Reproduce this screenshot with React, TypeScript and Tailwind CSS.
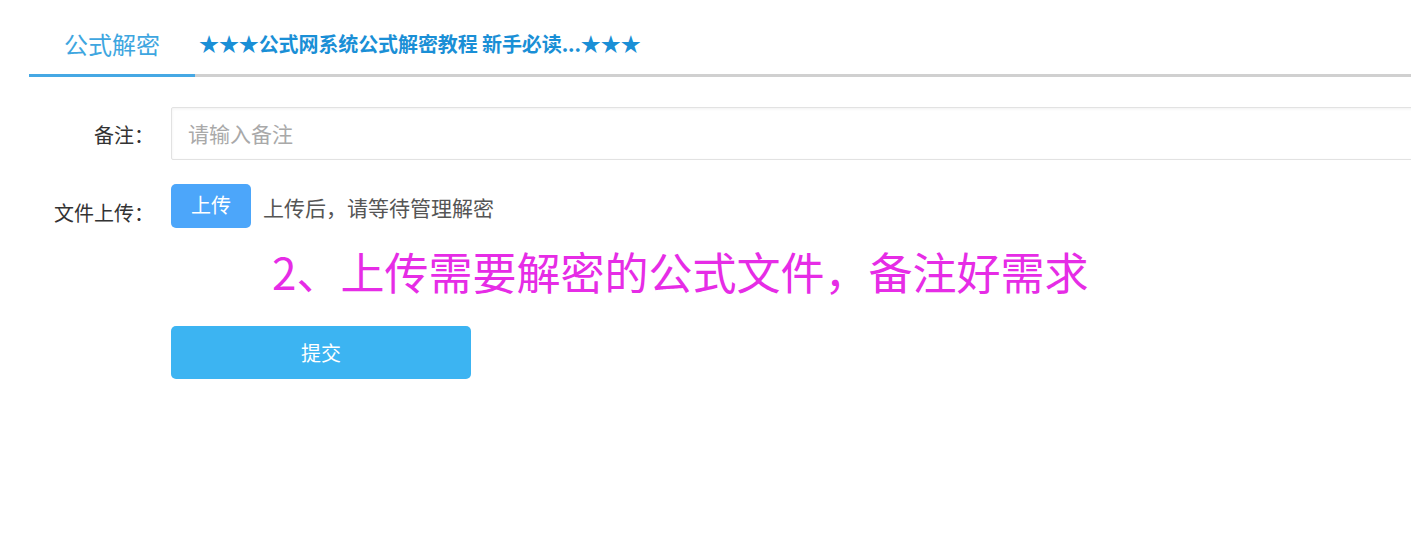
import React from "react";

export default function App() {
  const font = { fontFamily: '"Noto Sans CJK SC", "Noto Sans", sans-serif' };
  return (
    <div className="w-[1411px] h-[547px] overflow-hidden bg-white" style={font}>
      <div className="flex items-start ml-[29px] h-[77px] border-b-[3px] border-[#d0d0d0] w-[1500px]">
        <div className="w-[166px] h-[77px] -mb-[3px] border-b-[3px] border-[#46a8e4] flex justify-center pt-[26px]">
          <span className="text-[24px] leading-[36px] text-[#3ea6e0]">公式解密</span>
        </div>
        <div className="ml-[4px] pt-[28px]">
          <span className="text-[20px] leading-[32px] font-bold text-[#1a8fd6] tracking-[-0.1px]">
            ★★★公式网系统公式解密教程 新手必读...★★★
          </span>
        </div>
      </div>

      <div className="mt-[30px] flex items-center w-[1500px]">
        <div className="w-[154px] text-right text-[20px] leading-[30px] text-[#333] pt-[2px]">备注：</div>
        <div className="ml-[17px] w-[1300px] h-[53px] border border-[#e2e2e2] rounded-[2px] shadow-[inset_0_1px_3px_rgba(0,0,0,0.06)] flex items-center pl-[16px]">
          <span className="text-[21px] text-[#a9a9a9]">请输入备注</span>
        </div>
      </div>

      <div className="mt-[24px] flex items-start">
        <div className="w-[154px] text-right text-[20px] leading-[30px] text-[#333] pt-[14px]">文件上传：</div>
        <div className="ml-[17px] w-[80px] h-[44px] rounded-[5px] bg-[#4ca6fa] flex items-center justify-center">
          <span className="text-[20px] text-white leading-[28px] -mt-[2px]">上传</span>
        </div>
        <div className="ml-[12px] h-[44px] flex items-center">
          <span className="text-[21px] text-[#555] leading-[28px] mt-[2px]">上传后，请等待管理解密</span>
        </div>
      </div>

      <div className="mt-[17px] ml-[272px] text-[44px] leading-[52px] text-[#e62ce6] whitespace-nowrap">
        2、上传需要解密的公式文件，备注好需求
      </div>

      <div className="mt-[29px] ml-[171px] w-[300px] h-[53px] rounded-[5px] bg-[#3cb4f2] flex items-center justify-center">
        <span className="text-[20px] text-white leading-[28px]">提交</span>
      </div>
    </div>
  );
}
